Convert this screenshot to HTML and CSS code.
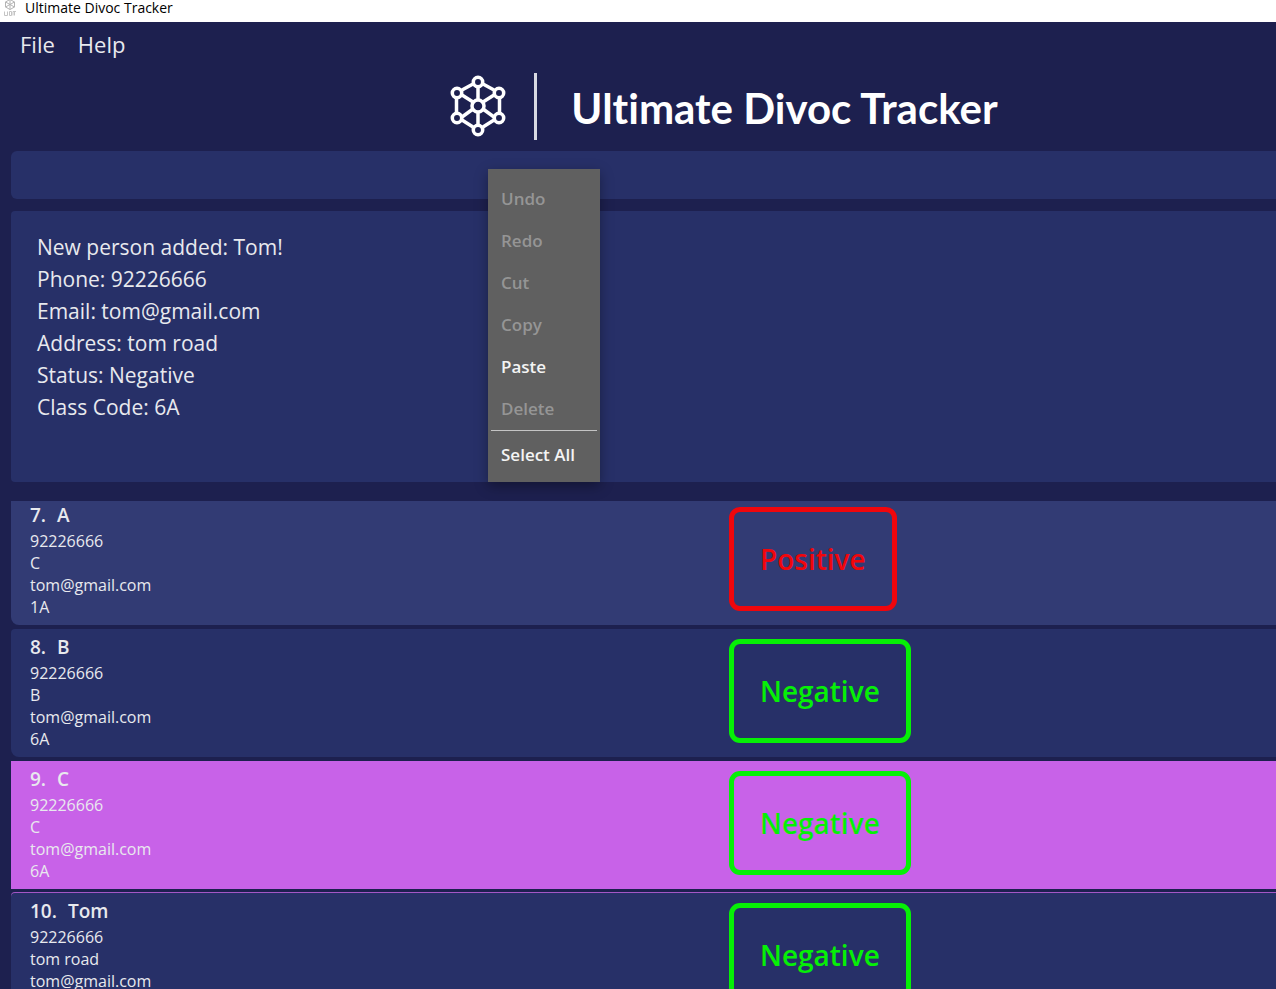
FILE: index.html
```html
<!DOCTYPE html>
<html lang="en">
<head>
<meta charset="utf-8">
<title>Ultimate Divoc Tracker</title>
<link rel="stylesheet" href="styles.css">
</head>
<body>
<div class="titlebar">
  <svg class="titlebar-icon" viewBox="0 0 16 18" aria-hidden="true">
    <g fill="none" stroke="#b4b4b4" stroke-width="1">
      <path d="M8 0.5 12.5 3v5L8 10.500 3.500 8V3zM8 .5v10M3.500 3l9 5M12.500 3l-9 5"/>
      <path d="M2.500 12.500v4h3v-4M7.500 12.500v4h2v-4zM11 16.500v-4h3M12.500 12.500v4" stroke="#c4c4c4"/>
    </g>
  </svg>
  <span>Ultimate Divoc Tracker</span>
</div>
<nav class="menubar">
  <button class="menubar-item" type="button">File</button>
  <button class="menubar-item" type="button">Help</button>
</nav>
<header class="brand">
  <svg class="brand-mark" viewBox="0 0 56 62" aria-hidden="true">
    <g fill="none" stroke="#fff" stroke-width="3.500">
      <path d="M33 9 44 15M49.500 21.500v18M44 45 33 52M23 52 12 45M6.500 39.500v-18M12 15 23 9"/>
      <path d="M28 12v13M28 37v12M12 20l11 7M44 20l-11 7M12 42l11-8M44 42l-11-8"/>
      <circle cx="28" cy="7" r="4.700"/>
      <circle cx="49" cy="18" r="4.700"/>
      <circle cx="49" cy="43" r="4.700"/>
      <circle cx="28" cy="55" r="4.700"/>
      <circle cx="7" cy="43" r="4.700"/>
      <circle cx="7" cy="18" r="4.700"/>
      <circle cx="28" cy="31" r="6"/>
    </g>
  </svg>
  <span class="brand-rule"></span>
  <h1 class="brand-name">Ultimate Divoc Tracker</h1>
</header>
<main class="content">
  <div class="command">
    <input class="command-input" type="text" aria-label="Command">
    <div class="context-menu" role="menu">
      <button class="context-item" type="button" role="menuitem" disabled>Undo</button>
      <button class="context-item" type="button" role="menuitem" disabled>Redo</button>
      <button class="context-item" type="button" role="menuitem" disabled>Cut</button>
      <button class="context-item" type="button" role="menuitem" disabled>Copy</button>
      <button class="context-item" type="button" role="menuitem">Paste</button>
      <button class="context-item" type="button" role="menuitem" disabled>Delete</button>
      <hr class="context-rule">
      <button class="context-item" type="button" role="menuitem">Select All</button>
    </div>
  </div>
  <section class="result">
    <p>New person added: Tom!</p>
    <p>Phone: 92226666</p>
    <p>Email: tom@gmail.com</p>
    <p>Address: tom road</p>
    <p>Status: Negative</p>
    <p>Class Code: 6A</p>
  </section>
  <ul class="people">
    <li class="person person-odd">
      <div class="person-details">
        <h2 class="person-name"><span>7.</span><span>A</span></h2>
        <p>92226666</p><p>C</p><p>tom@gmail.com</p><p>1A</p>
      </div>
      <span class="status status-positive">Positive</span>
    </li>
    <li class="person">
      <div class="person-details">
        <h2 class="person-name"><span>8.</span><span>B</span></h2>
        <p>92226666</p><p>B</p><p>tom@gmail.com</p><p>6A</p>
      </div>
      <span class="status">Negative</span>
    </li>
    <li class="person person-selected">
      <div class="person-details">
        <h2 class="person-name"><span>9.</span><span>C</span></h2>
        <p>92226666</p><p>C</p><p>tom@gmail.com</p><p>6A</p>
      </div>
      <span class="status">Negative</span>
    </li>
    <li class="person">
      <div class="person-details">
        <h2 class="person-name"><span>10.</span><span>Tom</span></h2>
        <p>92226666</p><p>tom road</p><p>tom@gmail.com</p>
      </div>
      <span class="status">Negative</span>
    </li>
  </ul>
</main>
</body>
</html>
```
FILE: styles.css
```css
* { box-sizing: border-box; }
body {
  margin: 0;
  height: 100vh;
  overflow: hidden;
  display: flex;
  flex-direction: column;
  background: #1d204f;
  color: #e8e9ee;
  font-family: "Open Sans", "Noto Sans", sans-serif;
}
p, h1, h2, ul { margin: 0; padding: 0; }
button { border: 0; background: none; font-family: inherit; }

.titlebar {
  flex: none;
  height: 22px;
  padding: 0 2px 6px;
  display: flex;
  align-items: center;
  gap: 7px;
  background: #fff;
  color: #000;
  font-size: 14px;
  line-height: 16px;
}
.titlebar-icon { width: 16px; height: 18px; }

.menubar {
  flex: none;
  display: flex;
  gap: 23px;
  padding: 7px 20px 9px;
}
.menubar-item {
  padding: 0;
  color: inherit;
  font-size: 22px;
  line-height: 30px;
}

.brand {
  flex: none;
  display: flex;
  align-items: center;
  justify-content: center;
  height: 68px;
  margin: 4px 0 11px;
  padding-left: 172px;
}
.brand-mark { width: 56px; height: 62px; }
.brand-rule {
  width: 3px;
  height: 67px;
  margin: 0 34px 0 28px;
  background: #d8d9e2;
}
.brand-name {
  padding-top: 4px;
  color: #fff;
  font-family: Lato, "Open Sans", sans-serif;
  font-size: 42px;
  font-weight: 700;
  font-variant-ligatures: none;
  line-height: 64px;
  white-space: nowrap;
}

.content {
  flex: 1;
  min-height: 0;
  display: flex;
  flex-direction: column;
  padding-left: 11px;
}
.command { position: relative; flex: none; }
.command-input {
  display: block;
  width: 100%;
  height: 48px;
  padding: 0 26px;
  border: 0;
  border-radius: 6px 0 0 6px;
  background: #273068;
  color: inherit;
  font: inherit;
  font-size: 21px;
}
.context-menu {
  position: absolute;
  z-index: 1;
  top: 18px;
  left: 477px;
  width: 112px;
  padding: 9px 0 6px;
  background: #606060;
  box-shadow: 0 4px 12px rgba(0, 0, 0, .35);
}
.context-item {
  display: block;
  width: 100%;
  padding: 0 13px;
  color: #f4f4f4;
  font-size: 17px;
  font-weight: 600;
  line-height: 42px;
  text-align: left;
  white-space: nowrap;
}
.context-item:disabled { color: #959595; }
.context-rule {
  height: 1px;
  margin: 0 3px 3px;
  border: 0;
  background: #c4c4c4;
}

.result {
  flex: none;
  height: 271px;
  margin: 12px 0 19px;
  padding: 20px 26px;
  border-radius: 4px 0 0 4px;
  background: #273068;
  font-size: 21px;
  line-height: 32px;
}

.people {
  flex: 1;
  min-height: 0;
  overflow: hidden;
  display: flex;
  flex-direction: column;
  gap: 4px;
  list-style: none;
}
.person {
  flex: none;
  display: grid;
  grid-template-columns: 21fr 16fr;
  align-items: start;
  height: 128px;
  border-radius: 4px 0 0 8px;
  background: #273068;
}
.person:first-child { margin-top: -4px; }
.person-odd { background: #323b74; }
.person-selected {
  border-radius: 0;
  background: #c862e8;
}
.person-selected + .person { box-shadow: 0 -1px #a456c6; }
.person-details {
  padding: 5px 19px;
  font-size: 16px;
  line-height: 22px;
}
.person-name {
  display: flex;
  gap: 11px;
  margin-bottom: 2px;
  font-size: 19px;
  font-weight: 600;
  line-height: 26px;
}
.status {
  justify-self: start;
  margin-top: 10px;
  padding: 0 26px;
  border: 5px solid #06f006;
  border-radius: 11px;
  color: #06f006;
  font-size: 28px;
  font-weight: 600;
  line-height: 94px;
}
.status-positive { border-color: #f0060c; color: #f0060c; }
```
